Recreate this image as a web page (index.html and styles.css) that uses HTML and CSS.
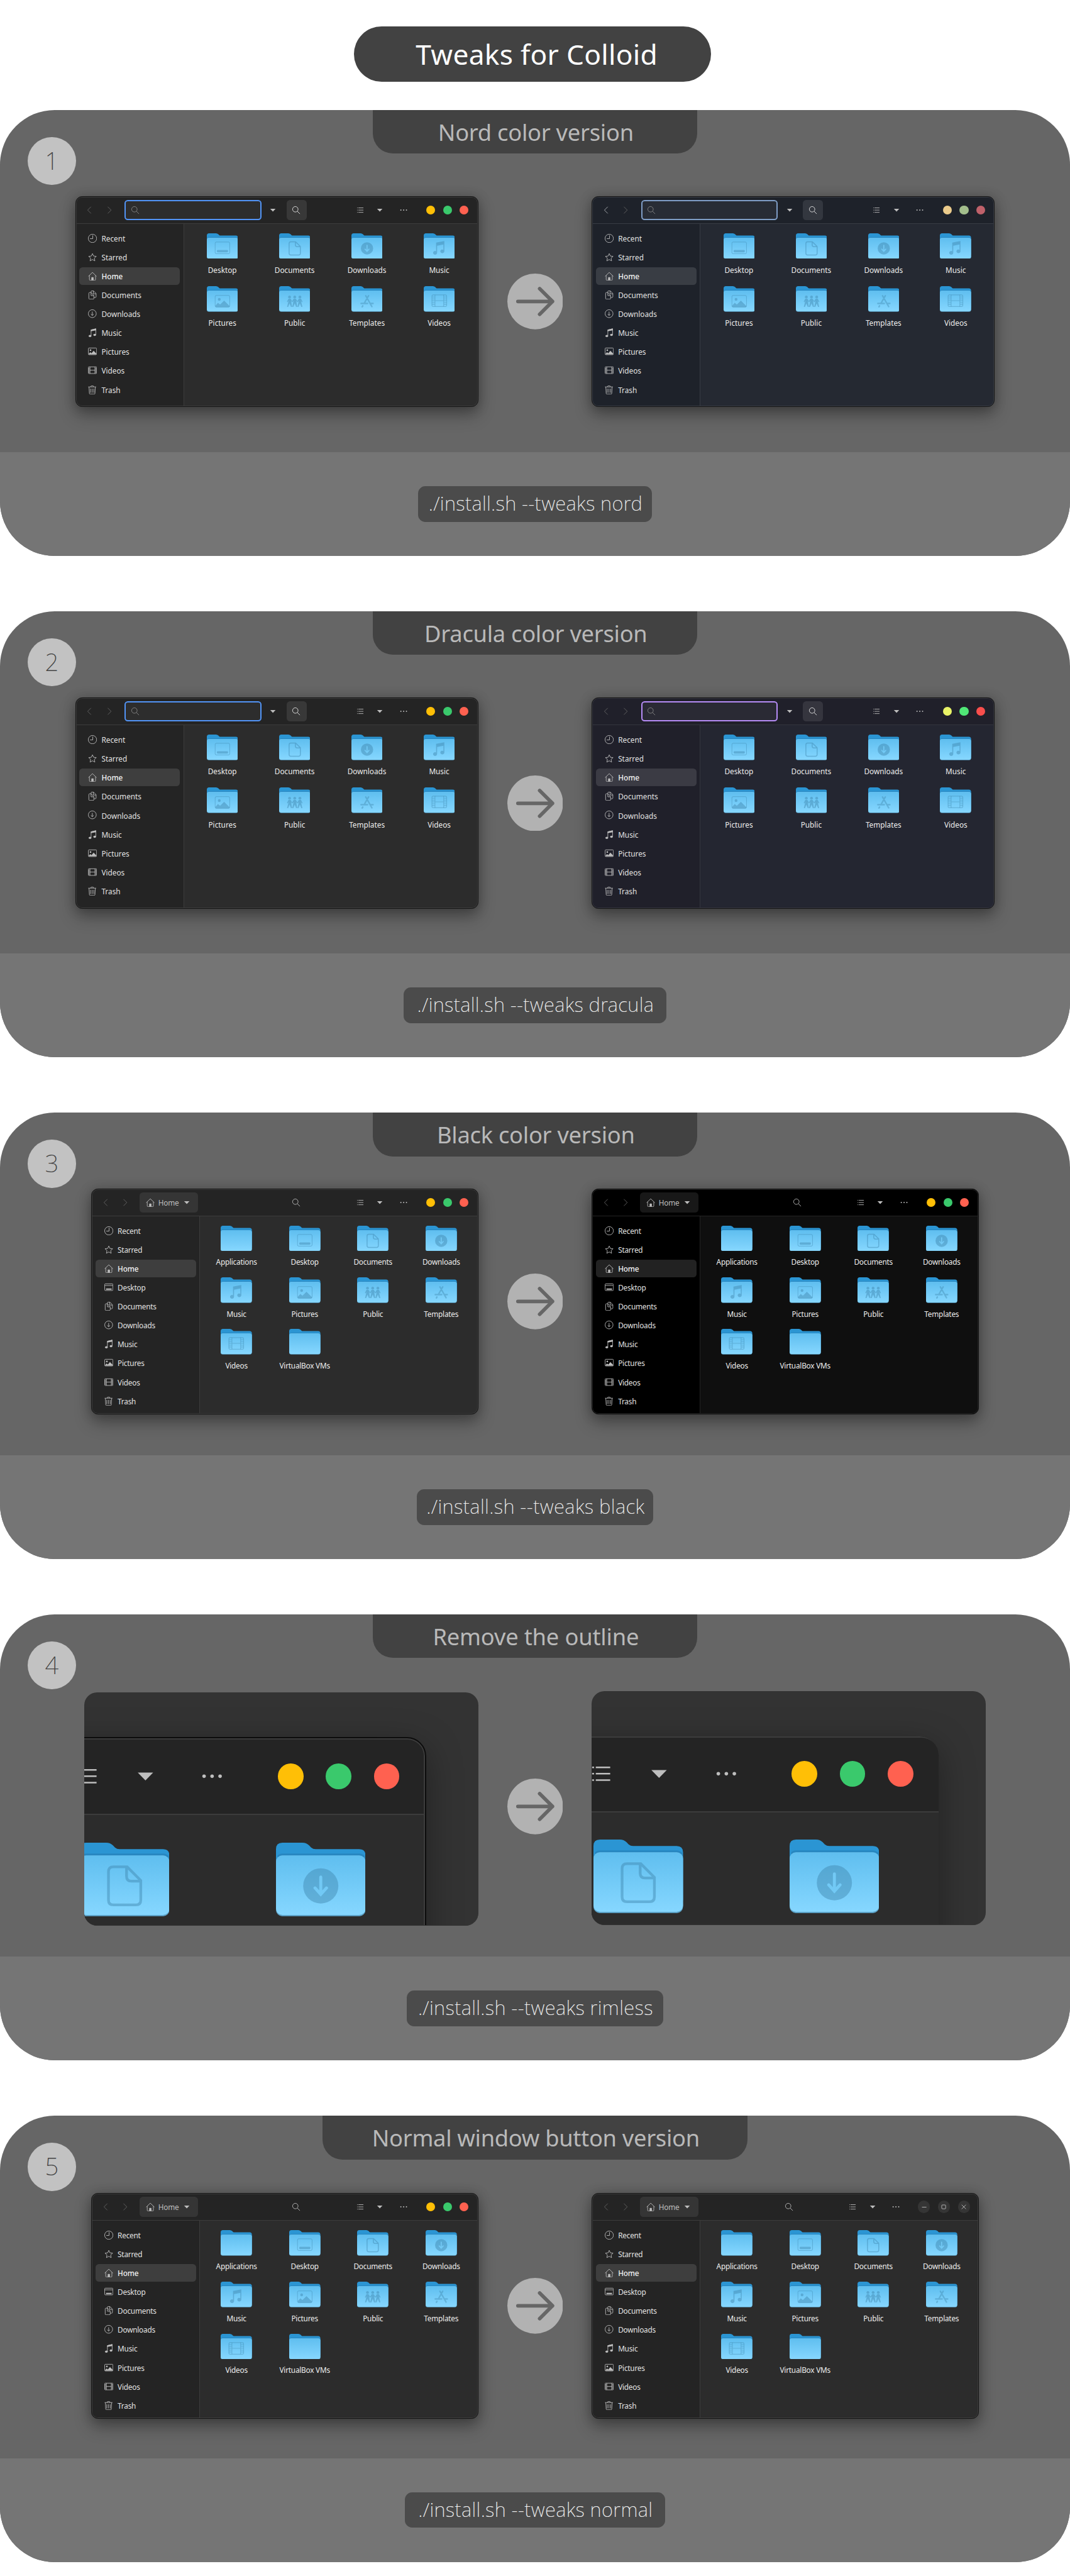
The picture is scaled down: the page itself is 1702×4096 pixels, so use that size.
FILE: index.html
```html
<!DOCTYPE html>
<html lang="en">
<head>
<meta charset="utf-8">
<title>Tweaks for Colloid</title>
<link rel="stylesheet" href="styles.css">
</head>
<body>
<svg class="defs" width="0" height="0" aria-hidden="true">
  <defs>
    <linearGradient id="front" x1="0" y1="0" x2="0" y2="1"><stop offset="0" stop-color="#5fbeef"/><stop offset="1" stop-color="#86d7ff"/></linearGradient>
  </defs>
  <symbol id="i-back" viewBox="0 0 16 16"><path d="M11 2 5 8l6 6" class="ln"/></symbol>
  <symbol id="i-forward" viewBox="0 0 16 16"><path d="m5 2 6 6-6 6" class="ln"/></symbol>
  <symbol id="i-search" viewBox="0 0 16 16"><circle cx="6.5" cy="6.5" r="4.9" class="ln"/><path d="m10.2 10.2 4.6 4.6" class="ln"/></symbol>
  <symbol id="i-caret" viewBox="0 0 16 16"><path d="M3.2 5.7h9.6L8 10.6z" fill="currentColor"/></symbol>
  <symbol id="i-list" viewBox="0 0 16 16"><path d="M2.3 4h1.2M2.3 8h1.2M2.3 12h1.2M4.6 4h9M4.6 8h9M4.6 12h9" class="ln"/></symbol>
  <symbol id="i-dots" viewBox="0 0 16 16"><g fill="currentColor"><circle cx="3" cy="8" r="1.1"/><circle cx="8" cy="8" r="1.1"/><circle cx="13" cy="8" r="1.1"/></g></symbol>
  <symbol id="i-min" viewBox="0 0 16 16"><path d="M4 8.5h8" class="ln"/></symbol>
  <symbol id="i-max" viewBox="0 0 16 16"><rect x="4.5" y="4.5" width="7" height="7" rx="1.2" class="ln"/></symbol>
  <symbol id="i-close" viewBox="0 0 16 16"><path d="m4.2 4.2 7.6 7.6M11.8 4.2l-7.6 7.6" class="ln"/></symbol>
  <symbol id="i-recent" viewBox="0 0 16 16"><circle cx="8" cy="8" r="7.5" class="ln"/><path d="M8.500 2.500V8.500H3.500" class="ln"/></symbol>
  <symbol id="i-starred" viewBox="0 0 16 16"><path d="m8 1.300 2 4.500 4.900.5-3.600 3.300 1 4.900L8 12l-4.300 2.500 1-4.900L1.100 6.300 6 5.800z" class="ln"/></symbol>
  <symbol id="i-home" viewBox="0 0 16 16"><path d="M.7 8.300 8 1.300l7.300 7M2.500 7v7q0 1.500 1.500 1.500h8q1.500 0 1.500-1.500V7" class="ln"/><path d="M6 15.500V11q0-1 1-1h2q1 0 1 1v4.500z" fill="currentColor"/></symbol>
  <symbol id="i-desktop" viewBox="0 0 16 16"><rect x=".5" y="1.500" width="15" height="12" rx="1.500" class="ln"/><path d="M1 4.500h14" class="ln"/><path d="M3 10h10v2H3z" fill="currentColor"/></symbol>
  <symbol id="i-documents" viewBox="0 0 16 16"><path d="M5.500 3.500H3Q1.500 3.500 1.500 5v9q0 1.500 1.500 1.500h6q1.500 0 1.500-1.500V9L5.500 3.500V9h5" class="ln"/><path d="M5.500 3.500V2Q5.500.5 7 .5h3l4.500 4.800V11q0 1.500-1.500 1.500h-2.500M9.500.8v5h5" class="ln"/></symbol>
  <symbol id="i-downloads" viewBox="0 0 16 16"><circle cx="7.700" cy="7.600" r="7.100" class="ln"/><path d="M7.700 4v6.800M5.200 8.400l2.500 2.500 2.500-2.500" class="ln"/></symbol>
  <symbol id="i-music" viewBox="0 0 16 16"><path d="M5.500 13.500V3l8.500-2v10.500" class="ln"/><path d="M5 2.600 14.500.4v3.300L5 5.500z" fill="currentColor"/><ellipse cx="3.600" cy="13.800" rx="2.400" ry="2" fill="currentColor"/><ellipse cx="12" cy="11.900" rx="2.400" ry="2" fill="currentColor"/></symbol>
  <symbol id="i-pictures" viewBox="0 0 16 16"><rect x=".5" y="1.500" width="15" height="12" rx="1.500" class="ln"/><circle cx="4.500" cy="5.500" r="1.500" fill="currentColor"/><path d="M1 12.500 4 9l2.300 2L10 6.500l5 5V13H1z" fill="currentColor"/></symbol>
  <symbol id="i-videos" viewBox="0 0 16 16"><rect x=".5" y="1.500" width="15" height="12" rx="1.200" class="ln"/><path d="M3.500 1.500v12m9-12v12M3.500 7.500h9M.5 4h3m-3 2.400h3m-3 2.400h3m-3 2.400h3m9-7.200h3m-3 2.400h3m-3 2.400h3m-3 2.400h3" class="ln"/></symbol>
  <symbol id="i-trash" viewBox="0 0 16 16"><path d="M.5 2.500h14M5 2.300Q5 .5 6.200.5h2.600q1.200 0 1.200 1.800M1.800 2.500l.7 11.600q.1 1.400 1.500 1.400h7q1.400 0 1.500-1.400l.7-11.600M4.500 5.500V13m3-7.500V13m3-7.500V13" class="ln"/></symbol>

  <symbol id="e-desktop" viewBox="0 0 56 46"><rect x="14.900" y="15.600" width="26.200" height="21" rx="2.200" class="el"/><rect x="18" y="30" width="20" height="4" rx="1.500" class="ef"/></symbol>
  <symbol id="e-documents" viewBox="0 0 56 46"><path d="M29.600 15.100H21q-3.100 0-3.100 3v17.800q0 3 3.100 3h14q3.100 0 3.100-3V23.600zM29.200 15.500V21q0 3 3 3h5.600" class="el em"/></symbol>
  <symbol id="e-downloads" viewBox="0 0 56 46"><circle cx="28" cy="27" r="11" class="ef"/><path d="M28 21.500v10.200M24.400 28.300l3.600 4 3.600-4" fill="none" stroke="#72c9f5" stroke-width="1.900" stroke-linecap="round"/></symbol>
  <symbol id="e-music" viewBox="0 0 56 46"><path d="M22.200 16.600 37 13.800v18.400a3.600 3.300 0 1 1-1.700-2.700V20.100l-11.300 2.300v12.400a3.600 3.300 0 1 1-1.800-2.700z" class="ef"/></symbol>
  <symbol id="e-pictures" viewBox="0 0 56 46"><rect x="14.900" y="16.600" width="26.200" height="21" rx="2.200" class="el"/><path d="M15.500 34.800 20 30l3.800 3 7.200-7 9.800 9.500v.5q0 1.500-1.500 1.500H17q-1.500 0-1.500-1.500z" class="ef"/><circle cx="22.300" cy="23.700" r="2.500" class="ef"/></symbol>
  <symbol id="e-public" viewBox="0 0 56 46"><g class="ef"><circle cx="18.700" cy="19.500" r="2.500"/><circle cx="28" cy="19.500" r="2.500"/><circle cx="37.300" cy="19.500" r="2.500"/><path d="M16.800 22.500h3.800l2.700 4.300 2.800-4.300h3.800l2.800 4.300 2.700-4.300h3.800L42 28l-1.200.8-1.700-2.700 2.700 11h-2L37.300 31l-2.500 6.100h-2l2.400-10.500-1.900 2.200-2.500-2.200 1.700 10.500h-2L28 31l-2.500 6.100h-2l2.300-10.500-2.500 2.200-1.900-2.200 1.900 10.500h-2L18.700 31l-2.500 6.100h-2l2.800-11-1.700 2.700L14 28z"/></g></symbol>
  <symbol id="e-templates" viewBox="0 0 56 46"><path d="M17.300 31h11.500M34.500 31h4.300M30.700 17.200 22.800 31M20.300 35.300l-1 1.700M25.700 17.200l11 19.500" class="el ex"/></symbol>
  <symbol id="e-videos" viewBox="0 0 56 46"><rect x="14.700" y="15.700" width="26.500" height="20.800" rx="2.500" class="el ev"/><path d="M20.200 15.500v21M35.800 15.500v21M20.200 26h15.600M15 19.500h5M15 22.800h5M15 26h5M15 29.300h5M15 32.600h5M36 19.500h5M36 22.800h5M36 26h5M36 29.300h5M36 32.600h5" class="el ev"/></symbol>
</svg>

<main class="page">
  <h1 class="title"><span data-fit="434">Tweaks for Colloid</span></h1>

  <section class="card">
    <span class="num">1</span>
    <h2 class="tab"><span data-fit="351">Nord color version</span></h2>
    <div class="compare c1">
      <div class="win" data-kind="search"></div>
      <svg class="arrow" viewBox="0 0 100 100"><circle cx="50" cy="50" r="50"/><path d="M19 50h62M58 27l23 23-23 23"/></svg>
      <div class="win nord" data-kind="search"></div>
    </div>
    <div class="foot"><code class="cmd w-nord"><span data-fit="384">./install.sh --tweaks nord</span></code></div>
  </section>

  <section class="card">
    <span class="num">2</span>
    <h2 class="tab"><span data-fit="400">Dracula color version</span></h2>
    <div class="compare c1">
      <div class="win" data-kind="search"></div>
      <svg class="arrow" viewBox="0 0 100 100"><circle cx="50" cy="50" r="50"/><path d="M19 50h62M58 27l23 23-23 23"/></svg>
      <div class="win dracula" data-kind="search"></div>
    </div>
    <div class="foot"><code class="cmd w-dracula"><span data-fit="425">./install.sh --tweaks dracula</span></code></div>
  </section>

  <section class="card">
    <span class="num">3</span>
    <h2 class="tab"><span data-fit="355">Black color version</span></h2>
    <div class="compare c3">
      <div class="win path" data-kind="path"></div>
      <svg class="arrow" viewBox="0 0 100 100"><circle cx="50" cy="50" r="50"/><path d="M19 50h62M58 27l23 23-23 23"/></svg>
      <div class="win path black" data-kind="path"></div>
    </div>
    <div class="foot"><code class="cmd w-black"><span data-fit="392">./install.sh --tweaks black</span></code></div>
  </section>

  <section class="card">
    <span class="num">4</span>
    <h2 class="tab"><span data-fit="370">Remove the outline</span></h2>
    <div class="compare c4">
      <div class="frame"><div class="win path close-up" data-kind="corner"></div></div>
      <svg class="arrow" viewBox="0 0 100 100"><circle cx="50" cy="50" r="50"/><path d="M19 50h62M58 27l23 23-23 23"/></svg>
      <div class="frame rimless"><div class="win path close-up" data-kind="corner"></div></div>
    </div>
    <div class="foot"><code class="cmd w-rimless"><span data-fit="422">./install.sh --tweaks rimless</span></code></div>
  </section>

  <section class="card">
    <span class="num">5</span>
    <h2 class="tab wide"><span data-fit="588">Normal window button version</span></h2>
    <div class="compare c5">
      <div class="win path" data-kind="path"></div>
      <svg class="arrow" viewBox="0 0 100 100"><circle cx="50" cy="50" r="50"/><path d="M19 50h62M58 27l23 23-23 23"/></svg>
      <div class="win path" data-kind="path" data-buttons="normal"></div>
    </div>
    <div class="foot"><code class="cmd w-normal"><span data-fit="421">./install.sh --tweaks normal</span></code></div>
  </section>
</main>
<script src="app.js"></script>
</body>
</html>
```

FILE: styles.css
```css
* { box-sizing: border-box; }

html, body { margin: 0; background: #fff; overflow: hidden; }

.defs { display: block; width: 0; height: 0; position: absolute; }

.page {
  width: 1920px;
  height: 4620px;
  padding-top: 47px;
  zoom: 0.88646;
  font-family: "Noto Sans", "Open Sans", sans-serif;
}

.ln { fill: none; stroke: currentColor; stroke-width: 1; }
.el { fill: none; stroke: #3f86ad; stroke-opacity: .45; stroke-width: 1.1; }
.em { stroke-width: 1.7; }
.ex { stroke-width: 2.7; stroke-linecap: round; stroke-opacity: .4; }
.ev { stroke-width: 1.3; stroke-opacity: .4; }
.ef { fill: #3f86ad; fill-opacity: .45; }

.title {
  width: 640px;
  height: 100px;
  margin: 0 0 50px 635.5px;
  padding-left: 15px;
  border-radius: 50px;
  background: #424242;
  color: #fff;
  font-size: 50px;
  font-weight: 400;
  line-height: 100px;
  text-align: center;
  white-space: nowrap;
}

.card {
  position: relative;
  display: flex;
  flex-direction: column;
  height: 800px;
  margin-bottom: 99.6px;
  border-radius: 98px;
  overflow: hidden;
  background: #666;
}

.num {
  position: absolute;
  left: 50px;
  top: 48.5px;
  width: 86px;
  height: 86px;
  border-radius: 50%;
  background: #c2c2c2;
  color: #444;
  font-size: 43px;
  font-weight: 200;
  line-height: 85px;
  text-align: center;
}

.tab {
  width: 583px;
  height: 78px;
  margin: 0 auto;
  padding-left: 3px;
  border-radius: 0 0 36px 36px;
  background: #424242;
  color: #b9b9b9;
  font-size: 41px;
  font-weight: 400;
  line-height: 79px;
  text-align: center;
  white-space: nowrap;
}
.tab.wide { width: 763px; }

.compare {
  flex: 1;
  display: grid;
  grid-template-columns: 858px 204px 1fr;
  align-items: center;
  align-content: start;
}
.compare > :first-child { justify-self: end; }
.compare > :last-child { justify-self: start; }
.c1 { padding-top: 77px; }
.c3 { padding-top: 58px; }
.c4 { padding-top: 61.5px; }
.c5 { padding-top: 60.5px; }

.arrow { width: 100px; height: 100px; justify-self: center; }
.arrow circle { fill: #b2b2b2; }
.arrow path { fill: none; stroke: #666; stroke-width: 6.5; stroke-linecap: round; stroke-linejoin: round; }
.c4 .arrow { margin-bottom: 9px; }

.foot {
  display: flex;
  align-items: center;
  justify-content: center;
  height: 186px;
  background: #757575;
}

.cmd {
  height: 64px;
  padding-left: 2px;
  border-radius: 13px;
  background: #4b4b4b;
  color: #f0f0f0;
  font-family: inherit;
  font-size: 35px;
  font-weight: 200;
  line-height: 62px;
  text-align: center;
  white-space: nowrap;
}
.w-nord { width: 420px; }
.w-dracula { width: 471px; }
.w-black { width: 425px; }
.w-rimless { width: 460px; }
.w-normal { width: 466px; }

/* File manager window */
.win {
  --side: #242424;
  --body: #2c2c2c;
  --line: #3c3c3c;
  --sel: #3e3e3e;
  --btn: #383838;
  --entry: #2d2d2d;
  --accent: #5294f6;
  --outline: #141414;
  --min: #ffbf06;
  --max: #3ac96c;
  --close: #ff6150;
  --nav: #666;
  width: 723px;
  height: 378px;
  display: flex;
  flex-direction: column;
  border: 1px solid var(--outline);
  border-radius: 12px;
  background: var(--side);
  box-shadow: 0 14px 30px rgba(0, 0, 0, .3), 0 2px 22px rgba(0, 0, 0, .22);
  overflow: hidden;
  position: relative;
  color: #bebebe;
  font-size: 13.33px;
}
.win::after {
  content: "";
  position: absolute;
  inset: 0;
  border: 1px solid var(--line);
  border-radius: 11px;
}
.nord {
  --side: #1e222a; --body: #252932; --line: #383c44; --sel: #393d44; --btn: #33373f;
  --entry: #282c35; --accent: #7f9dc6; --min: #ebcb8b; --max: #a3be8c; --close: #bf616a;
}
.dracula {
  --side: #20202a; --body: #242631; --line: #34353e; --sel: #3b3b44; --btn: #35353e;
  --entry: #2a2a34; --accent: #b68cf6; --min: #e8f367; --max: #50e777; --close: #f94e4c;
}
.black {
  --side: #000; --body: #0f0f0f; --line: #232323; --sel: #222; --btn: #181818; --outline: #111;
}
.path { width: 694px; height: 405px; --btn: #353535; letter-spacing: -.25px; }
.path.black { --btn: #181818; }

.bar {
  display: flex;
  align-items: center;
  height: 48px;
  flex: none;
  padding: 0 16px 0 6px;
  border-bottom: 1px solid var(--line);
}
.ico { width: 16px; height: 16px; flex: none; display: block; }
.tool { width: 36px; height: 36px; flex: none; display: flex; align-items: center; justify-content: center; border-radius: 6px; }
.nav { color: var(--nav); }
.nord .nav:first-child { color: #b4b6ba; }
.entry {
  width: 246px;
  height: 36px;
  margin-left: 9px;
  padding-left: 9px;
  display: flex;
  align-items: center;
  border: 2.3px solid var(--accent);
  border-radius: 6px;
  background: var(--entry);
  color: #888;
}
.drop { width: 42px; margin-right: 3px; }
.on { background: var(--btn); color: #e8e8e8; }
.crumb {
  display: flex;
  align-items: center;
  width: 105px;
  height: 36px;
  margin-left: 7px;
  padding-left: 12px;
  border-radius: 6px;
  background: var(--btn);
}
.crumb span { width: 42px; padding-left: 6px; margin-right: 7px; }
.right { display: flex; align-items: center; margin-left: auto; }
.right .view { margin-left: 78px; }
.right .more { margin-left: 6px; }
.dots { display: flex; gap: 14px; margin-left: 23px; }
.dots i { width: 16px; height: 16px; border-radius: 50%; }
.dots i:nth-child(1) { background: var(--min); }
.dots i:nth-child(2) { background: var(--max); }
.dots i:nth-child(3) { background: var(--close); }
.controls { display: flex; gap: 14px; margin: 0 -2px 0 21px; }
.controls b { width: 22px; height: 22px; padding: 3px; border-radius: 50%; background: #353535; }

.main { flex: 1; display: flex; min-height: 0; }
.side {
  width: 194px;
  flex: none;
  padding: 10px 6px;
  display: flex;
  flex-direction: column;
  gap: 2px;
  border-right: 1px solid var(--line);
}
.row {
  display: flex;
  align-items: center;
  gap: 8px;
  height: 32px;
  flex: none;
  padding-left: 16px;
  border-radius: 6px;
}
.row span { color: #e2e2e2; }
.row.sel { background: var(--sel); }
.row.sel span { color: #f2f2f2; font-weight: 500; }
.files {
  flex: 1;
  display: grid;
  grid-template-columns: repeat(4, 1fr);
  grid-auto-rows: 76px;
  gap: 19px 0;
  padding: 17px 4px 0;
  align-content: start;
  background: var(--body);
}
.path .files { row-gap: 17px; }
.file { display: flex; flex-direction: column; align-items: center; gap: 12px; line-height: 18px; color: #ededed; white-space: nowrap; }
.path .file { gap: 11px; }
.folder { width: 56px; height: 46px; flex: none; display: block; }

.frame {
  width: 707px;
  height: 419px;
  border-radius: 23px;
  border-bottom: 2px solid #333;
  overflow: hidden;
  background: #333;
  display: flex;
  justify-content: flex-end;
  align-items: flex-start;
  align-self: start;
  padding: 81px 93px 0 0;
}
.frame.rimless { padding-right: 84.5px; margin-top: -1.7px; }
.close-up { flex: none; zoom: 2.87; box-shadow: 0 6px 22px rgba(0, 0, 0, .35); --outline: #0c0c0c; }
.rimless .close-up { border-width: 0; width: 692px; }
.rimless .close-up::after { border-width: 1px 0 0; }
.rimless .bar { height: 47.500px; }
```

FILE: app.js
```js
const icon = (name, cls = '') => `<svg class="ico ${cls}"><use href="#i-${name}"/></svg>`;
const tool = (name, cls = '') => `<div class="tool ${cls}">${icon(name)}</div>`;

const folder = (emblem) => `<svg class="folder" viewBox="0 0 56 46">
  <path fill="#2b95d3" d="M4 0h12.500q2.500 0 4.200 1.700L22 3q1.200 1 2.800 1H52q4 0 4 4v30H0V4q0-4 4-4z"/>
  <path fill="#2786c0" d="M1 8q1.200-1.200 3-1.200h48q2 0 3.500 1.500v4H1z"/>
  <rect y="8" width="56" height="38" rx="4" fill="#5a9fc4"/>
  <rect y="8" width="56" height="37.200" rx="4" fill="url(#front)"/>
  ${emblem ? `<use href="#e-${emblem}"/>` : ''}</svg>`;

const places = {
  search: ['Recent', 'Starred', 'Home', 'Documents', 'Downloads', 'Music', 'Pictures', 'Videos', 'Trash'],
  path: ['Recent', 'Starred', 'Home', 'Desktop', 'Documents', 'Downloads', 'Music', 'Pictures', 'Videos', 'Trash'],
  corner: [],
};
const files = {
  search: ['Desktop', 'Documents', 'Downloads', 'Music', 'Pictures', 'Public', 'Templates', 'Videos'],
  path: ['Applications', 'Desktop', 'Documents', 'Downloads', 'Music', 'Pictures', 'Public', 'Templates', 'Videos', 'VirtualBox VMs'],
  corner: ['Applications', 'Desktop', 'Documents', 'Downloads'],
};
const plain = ['Applications', 'VirtualBox VMs'];

document.querySelectorAll('.win').forEach((win) => {
  const kind = win.dataset.kind;
  const location = {
    search: `<div class="entry">${icon('search')}</div>${tool('caret', 'drop')}${tool('search', 'on')}`,
    path: `<div class="crumb">${icon('home')}<span>Home</span>${icon('caret')}</div>`,
    corner: '',
  }[kind];
  const buttons = win.dataset.buttons === 'normal'
    ? `<div class="controls"><b>${icon('min')}</b><b>${icon('max')}</b><b>${icon('close')}</b></div>`
    : '<div class="dots"><i></i><i></i><i></i></div>';
  const label = (f) => (kind === 'corner' ? '' : `<span>${f}</span>`);
  win.innerHTML = `
    <div class="bar">
      ${tool('back', 'nav')}${tool('forward', 'nav')}${location}
      <div class="right">${kind === 'path' ? tool('search') : ''}${tool('list', 'view')}${tool('caret')}${tool('dots', 'more')}${buttons}</div>
    </div>
    <div class="main">
      <div class="side">${places[kind].map((p) => `<div class="row${p === 'Home' ? ' sel' : ''}">${icon(p.toLowerCase())}<span>${p}</span></div>`).join('')}</div>
      <div class="files">${files[kind].map((f) => `<div class="file">${folder(plain.includes(f) ? '' : f.toLowerCase())}${label(f)}</div>`).join('')}</div>
    </div>`;
});

// Track headings and commands out to their set measure.
const ctx = document.createElement('canvas').getContext('2d');
document.querySelectorAll('[data-fit]').forEach((el) => {
  const s = getComputedStyle(el.parentElement);
  ctx.font = `${s.fontWeight} 100px "Noto Sans"`;
  const size = { H1: 50, H2: 41, CODE: 35 }[el.parentElement.tagName];
  const natural = ctx.measureText(el.textContent).width * size / 100;
  el.style.letterSpacing = `${(el.dataset.fit - natural) / el.textContent.length}px`;
});
```
